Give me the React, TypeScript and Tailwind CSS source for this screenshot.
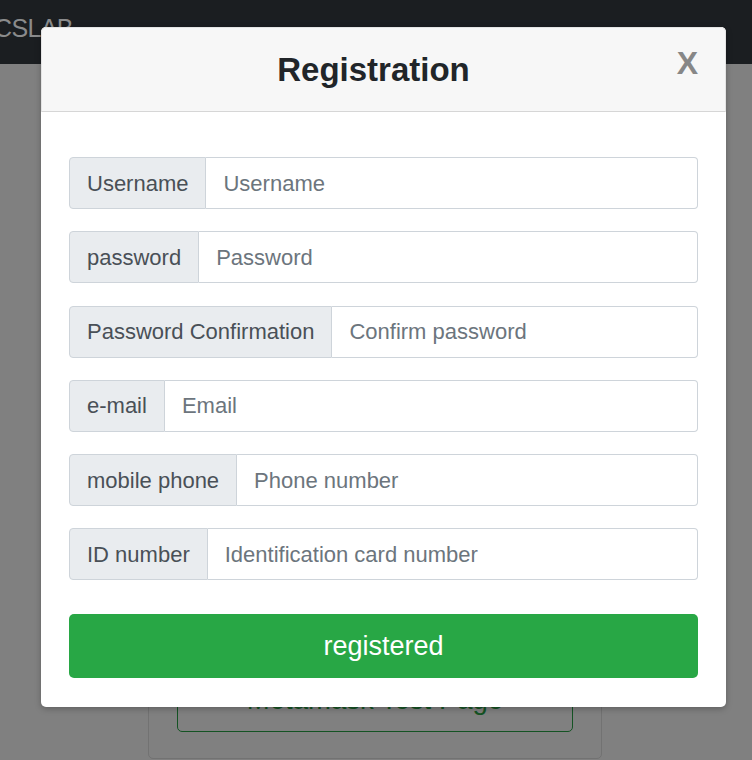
const fields = [
  { label: "Username", placeholder: "Username" },
  { label: "password", placeholder: "Password" },
  { label: "Password Confirmation", placeholder: "Confirm password" },
  { label: "e-mail", placeholder: "Email" },
  { label: "mobile phone", placeholder: "Phone number" },
  { label: "ID number", placeholder: "Identification card number" },
];

const App = () => {
  return (
    <div className="relative w-[752px] h-[760px] overflow-hidden bg-[#808080] font-['Liberation_Sans',Arial,sans-serif]">
      {/* PAGE (dimmed by backdrop) */}
      <header className="h-16 bg-[#1b1e21] flex items-center">
        <span className="-ml-[6px] -mt-[6px] text-[25px] text-[#8a8b8c] font-light tracking-tight">CSLAB</span>
      </header>
      <div className="ml-[148px] mt-[40px] w-[454px] h-[655px] border border-[#727272] rounded-[5px] flex flex-col justify-end px-[28px] pb-[26px]">
        <div className="h-[64px] border border-[#145323] rounded-[5px] flex items-center justify-center text-[27.5px] text-[#145323]">
          Metamask Test Page
        </div>
      </div>

      {/* MODAL */}
      <div className="absolute left-[41px] top-[27px] w-[685px] bg-white rounded-[5px] shadow-[0_2px_6px_rgba(0,0,0,0.25)]">
        <div className="relative h-[85px] bg-[#f7f7f7] border border-[#e4e4e4] border-b-[#d6d6d6] rounded-t-[5px] flex items-center justify-center pr-[20px]">
          <h2 className="text-[33px] font-bold text-[#212529]">Registration</h2>
          <button className="absolute right-[27px] top-[19px] text-[32px] font-bold text-[#878787] leading-none">X</button>
        </div>

        <div className="px-[28px] pt-[45px] pb-[29px]">
          <div className="flex flex-col gap-[22.25px]">
            {fields.map((f) => (
              <div key={f.label} className="flex h-[52px] text-[22px]">
                <span className="flex items-center px-[17px] bg-[#e9ecef] text-[#495057] border border-[#ced4da] rounded-l-[4px] whitespace-nowrap">
                  {f.label}
                </span>
                <input
                  placeholder={f.placeholder}
                  className="flex-1 min-w-0 px-[17px] border border-l-0 border-[#ced4da] rounded-r-[4px] text-[#495057] placeholder:text-[#6c757d] outline-none"
                />
              </div>
            ))}
          </div>
          <button className="mt-[34px] w-full h-[64px] rounded-[5px] bg-[#28a745] text-white text-[27px]">
            registered
          </button>
        </div>
      </div>
    </div>
  );
};

export default App;
